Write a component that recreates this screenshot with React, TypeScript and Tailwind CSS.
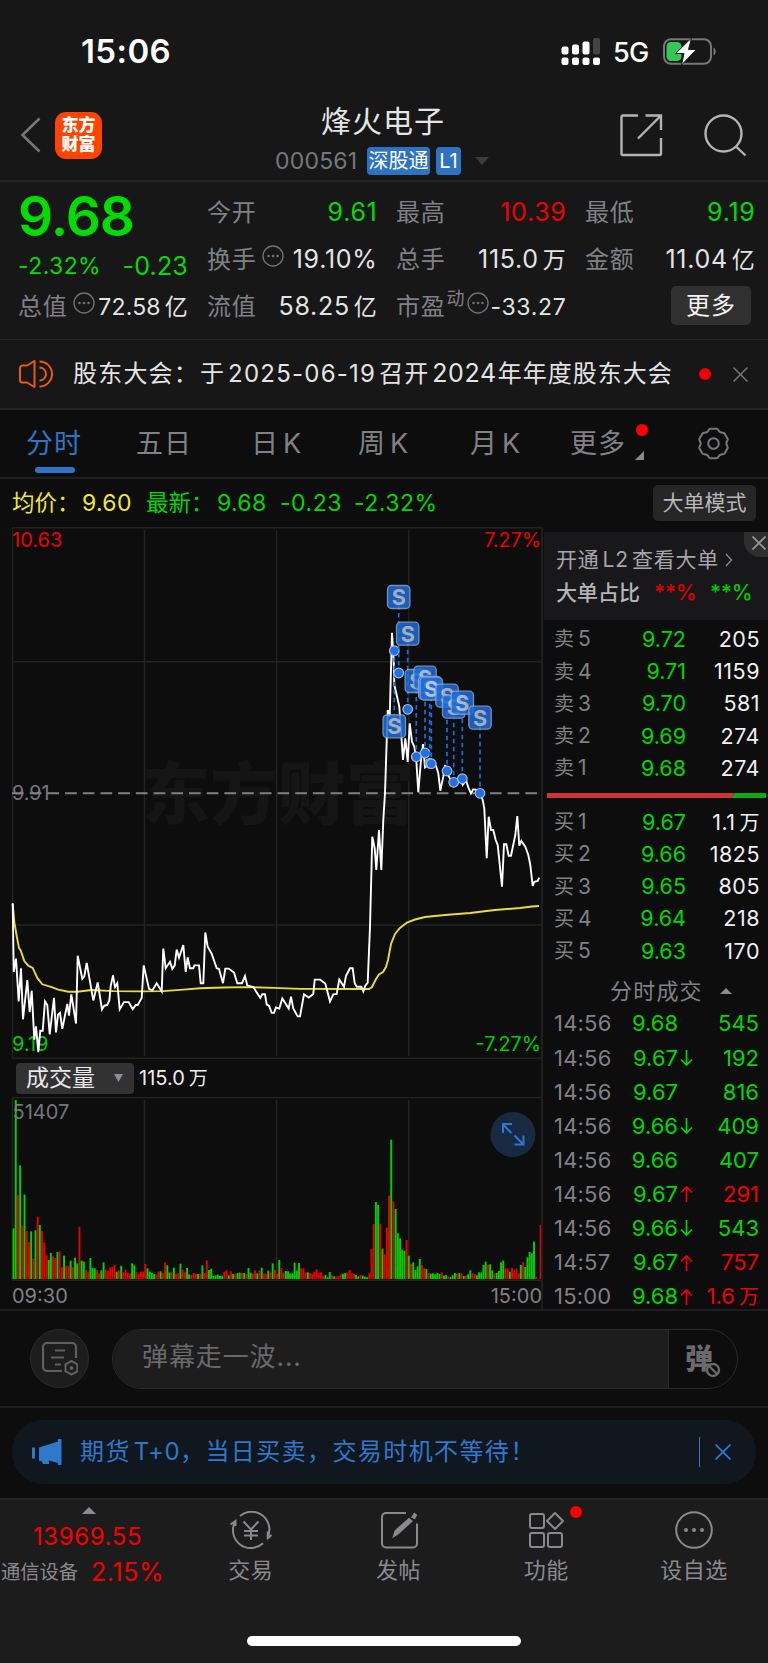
import React from 'react';

const MORNING_PRICE: number[][] = [
  [38,1073],[41,1265],[48,1228],[56,1348],[63,1255],[69,1398],[82,1288],[89,1378],[95,1318],[103,1455],[108,1418],[115,1490],[121,1430],[128,1430],[135,1348],[142,1358],[149,1440],[162,1338],[168,1435],[174,1385],[180,1380],[187,1425],[202,1355],[207,1388],[214,1328],[228,1410],[233,1220],[247,1285],[253,1278],[260,1240],[280,1345],[293,1295],[306,1370],[313,1360],[322,1358],[328,1345],[332,1305],[339,1275],[345,1308],[352,1297],[359,1370],[372,1350],[386,1350],[398,1370],[407,1358],[413,1358],[425,1338],[431,1247],[447,1313],[457,1317],[470,1297],[485,1320],[490,1200],[497,1255],[510,1237],[517,1257],[524,1247],[530,1203],[537,1225],[550,1190],[557,1265],[563,1225],[570,1255],[580,1255],[583,1247],[597,1247],[602,1297],[610,1297],[616,1155],[623,1195],[635,1215],[650,1255],[657,1257],[669,1297],[676,1256],[686,1256],[702,1267],[712,1297],[726,1297],[735,1277],[742,1303],[760,1308],[781,1338],[787,1328],[795,1328],[800,1357],[807,1360],[815,1380],[822,1380],[828,1365],[838,1368],[847,1340],[866,1368],[873,1335],[880,1368],[893,1390],[900,1390],[912,1328],[926,1337],[940,1327],[944,1287],[960,1287],[976,1298],[990,1348],[1000,1328],[1010,1327],[1018,1287],[1032,1307]];

const AFTERNOON_PRICE: number[][] = [
  [344,986.7],[346,975.7],[350,968.3],[352.7,968.3],[354.7,983.3],[356.7,986.7],[361.3,986.7],[363.3,991.3],[365.3,985.7],[367.7,982.7],[370,926.7],[372.3,836.7],[374.7,848.3],[376.3,870],[379,830],[381.3,870],[383.3,820],[385,793.3],[387.7,710],[389.7,716.7],[392,632.7],[393.7,660],[394.3,685],[396.7,695],[399.3,706.7],[403,760],[405.3,738.3],[407.7,762],[409.7,723.3],[412,741.7],[414.3,746.7],[416.3,760],[418.3,792.3],[421,760],[423,744],[425,767.3],[430,763.3],[436,766],[438.3,773.3],[440.3,790.7],[443.3,776.7],[445,765],[447.3,773.3],[451,780.7],[453.7,783.3],[460,778.3],[462.7,785],[466,780],[468.3,787.3],[471,793.3],[473.3,789.3],[477.3,790],[480.7,795],[482.7,800],[484.3,808.3],[486.7,858.3],[488.7,816.7],[491,830],[493.3,830],[495.7,840],[497.7,845],[502,886.7],[504,844.3],[506.3,844.3],[508.7,855.7],[511,855.7],[515.3,835],[517.3,816],[519.3,845.7],[521.3,841],[525.3,846.7],[528.3,855],[530.3,865],[532.7,886],[534.3,881.7],[537.7,881],[539.3,877.7]];

const MORNING_AVG: number[][] = [
  [38,1075],[43,1125],[50,1165],[57,1198],[62,1205],[73,1235],[85,1248],[98,1254],[112,1282],[127,1300],[155,1308],[175,1315],[205,1321],[232,1321],[275,1316],[340,1319],[420,1320],[490,1319],[550,1315],[600,1311],[670,1309],[740,1308],[820,1310],[900,1313]];

const AFTERNOON_AVG: number[][] = [
  [360,989],[369,989],[372,987],[376,979],[379,974.5],[383,972],[386,967],[388,960],[391,944],[395,934],[400,928],[407,922.5],[415,919.5],[425,917],[445,915],[470,913],[495,910],[520,908],[532,906.5],[539,906]];

const toLine = (am: number[][], pm: number[][]) =>
  [...am.map(([x, y]) => [x / 3, 520 + y / 2.8]), ...pm]
    .map(([x, y]) => `${x.toFixed(1)},${y.toFixed(1)}`)
    .join(' ');

const VOLUME = (
  'g152 g537 r252 g341 r161 g253 r144 r110 g143 r62 g146 r187 g162 r144 r110 r71 g57 g78 r68 r63 g81 r83 r35 g70 r40 r40 g55 r35 g64 g47 r157 g55 g52 r27 r22 g63 g33 g32 r27 r17 g26 g50 r28 r24 r35 r36 r42 g22 r26 g40 r20 r29 r18 r17 g47 g41 r22 r15 r22 r23 ' +
  'r45 g32 g22 g18 g15 r14 r22 g23 r18 r50 g41 g20 r20 g34 r16 r18 g46 r28 r20 g33 g14 r12 r18 r15 g15 r16 g41 r18 r56 g27 g31 g9 g11 g13 g9 g10 r22 r26 g11 r23 g15 r15 g18 g19 r18 g18 r15 g33 g19 r16 r26 g17 r25 g34 r17 r15 g25 r20 g47 r28 ' +
  'r15 g57 r33 r20 g24 g23 g17 g17 g49 g25 g48 r33 r32 r20 g20 r18 r16 r22 r29 r18 r20 r10 g12 g5 g21 r11 g8 r7 r9 r14 g16 g18 r20 r27 r18 r16 g12 g8 r12 g10 g7 g5 r17 r90 r165 g231 g222 r166 g91 r74 r154 r250 g418 r233 g210 g137 g122 g88 g85 r117 ' +
  'g70 r45 g50 g27 g38 g60 r42 r32 g30 r18 g16 g17 g14 g18 g15 r20 g10 g12 r8 g6 g11 g18 r16 g18 r17 g9 r10 g14 g26 r17 r15 g11 g20 g20 g42 g52 r43 g44 g26 r17 g18 g24 g50 g55 r33 r32 g22 r33 r26 r31 r17 g42 r50 g36 g65 g81 g77 g112 r7 r0 r162'
).split(' ');

const SELLS = [
  [394.3, 726.3, 650.7], [398.7, 597, 673], [407.7, 633.7, 709.3], [416.3, 681, 756.7], [425, 677.7, 753],
  [429.7, 687.8, 763.3], [431.3, 688.7, 763.7], [447, 695.7, 771], [453.7, 706.7, 782.3], [462.3, 702.7, 778.7], [480, 717.7, 793.3],
];

function More({ className = '' }: { className?: string }) {
  return (
    <svg className={className} width="22" height="22" viewBox="0 0 22 22" fill="none">
      <circle cx="11" cy="11" r="10" stroke="#6f7074" strokeWidth="1.4" />
      <g fill="#6f7074"><circle cx="6.5" cy="11" r="1.3" /><circle cx="11" cy="11" r="1.3" /><circle cx="15.5" cy="11" r="1.3" /></g>
    </svg>
  );
}

function StatusBar() {
  return (
    <div className="flex h-[90px] items-start pl-[82px] pt-[30px] text-white">
      <span className="-ml-px w-[480px] text-[33px] leading-[43px] font-semibold tracking-[0.4px]">15:06</span>
      <svg className="mt-2 shrink-0" width="40" height="28" viewBox="0 0 40 28" fill="#fff">
        <rect x="0.5" y="8.5" width="7" height="8" rx="2" /><rect x="11" y="6.5" width="7" height="10" rx="2" /><rect x="21.5" y="3.5" width="7" height="13" rx="2" />
        <rect x="32" y="0" width="7" height="16.5" rx="2" fill="#444" />
        <rect x="0.5" y="19.5" width="7" height="7.5" rx="2" /><rect x="11" y="19.5" width="7" height="7.5" rx="2" /><rect x="21.5" y="19.5" width="7" height="7.5" rx="2" /><rect x="32" y="19.5" width="7" height="7.5" rx="2" />
      </svg>
      <span className="ml-3 w-[50px] text-[27px] leading-[46px] font-medium tracking-[-0.8px]">5G</span>
      <svg className="mt-2 shrink-0" width="54" height="28" viewBox="0 0 54 28">
        <rect x="1" y="1.2" width="47" height="24.6" rx="7" fill="none" stroke="#77777a" strokeWidth="2" />
        <path d="M50.500 9.500c3 1.500 3 6.500 0 8z" fill="#77777a" />
        <rect x="3.500" y="4" width="15" height="19" rx="4.500" fill="#34c759" />
        <path d="M28.500 0 12.500 15.500h8.500L18.500 27 33.500 11.500h-8z" fill="#fff" stroke="#171717" strokeWidth="1" />
      </svg>
    </div>
  );
}

function Header() {
  return (
    <div className="flex h-[92px] items-center border-b-2 border-[#242426]">
      <svg className="ml-5 shrink-0" width="22" height="36" viewBox="0 0 22 36"><path d="M19.500 1.500 2.500 18l17 16.500" fill="none" stroke="#77777a" strokeWidth="2.600" /></svg>
      <div className="ml-[13px] flex h-[47px] w-[47px] shrink-0 flex-col items-center justify-center rounded-[11px] bg-[#ff4400] text-[17px] leading-[19px] font-black text-white">
        <span>东方</span><span>财富</span>
      </div>
      <div className="ml-[173px] w-[215px]">
        <div className="mt-[6px] pl-[46px] text-[30px] leading-[38px] tracking-[1px] text-[#e4e4e6]">烽火电子</div>
        <div className="mt-[7px] flex h-7 items-center">
          <span className="w-[92px] text-[23px] leading-7 tracking-[0.2px] text-[#77787c]">000561</span>
          <span className="w-[63px] rounded bg-[#2e72c3] text-center text-[20px] leading-7 text-white">深股通</span>
          <span className="ml-[6px] w-[25px] rounded bg-[#2e72c3] text-center text-[20px] leading-7 text-white">L1</span>
          <svg className="ml-[14px]" width="14" height="8" viewBox="0 0 14 8"><path d="M0 0h14L7 8z" fill="#3c3c3e" /></svg>
        </div>
      </div>
      <svg className="ml-[130px] shrink-0" width="43" height="43" viewBox="0 0 43 43" fill="none" stroke="#b4b4b6" strokeWidth="2.400">
        <path d="M18 1.500H3a1.500 1.500 0 0 0-1.500 1.500v36.500A1.500 1.500 0 0 0 3 41h36.500a1.500 1.500 0 0 0 1.500-1.500V24M25.500 1.500H41V16M40.500 2 18 24.500" />
      </svg>
      <svg className="ml-[41px] shrink-0" width="43" height="43" viewBox="0 0 43 43" fill="none" stroke="#b4b4b6" strokeWidth="2.400">
        <circle cx="19.500" cy="19.500" r="18" /><path d="m32 32.500 9.500 9" />
      </svg>
    </div>
  );
}

function Stat({ label, children, color = 'text-[#e4e4e6]', extra }: { label: string; children: React.ReactNode; color?: string; extra?: React.ReactNode }) {
  return (
    <div className="flex h-[47px] items-center justify-between whitespace-nowrap">
      <span className="flex items-center text-[24px] tracking-[0.8px] text-[#808186]">{label}{extra}</span>
      <span className={'-mr-[1.500px] text-[25px] tracking-[0.700px] ' + color}>{children}</span>
    </div>
  );
}

const CJ = ({ children }: { children: React.ReactNode }) => <span className="ml-[4px] text-[23px]">{children}</span>;

function Stats() {
  return (
    <div className="grid h-[158px] grid-cols-4 gap-x-5 border-b border-[#242426] pt-[7px] pr-[14px] pl-[18px]">
      <div className="text-[#00dd00]">
        <div className="h-[58px] text-[55px] leading-[54px] font-semibold tracking-[-1px]">9.68</div>
        <div className="flex h-[36px] items-center justify-between pt-[3px]">
          <span className="text-[23px] tracking-[0.400px]">-2.32%</span><span className="-mr-px text-[25px] tracking-[0.200px]">-0.23</span>
        </div>
        <Stat label="总值" extra={<More className="mb-2 ml-[5px]" />}><span className="text-[23px] tracking-[0.200px]">72.58</span><CJ>亿</CJ></Stat>
      </div>
      <div>
        <Stat label="今开" color="text-[#00dd00]">9.61</Stat>
        <Stat label="换手" extra={<More className="mb-2 ml-[5px]" />}>19.10%</Stat>
        <Stat label="流值">58.25<CJ>亿</CJ></Stat>
      </div>
      <div>
        <Stat label="最高" color="text-[#f00000]">10.39</Stat>
        <Stat label="总手">115.0<CJ>万</CJ></Stat>
        <Stat label="市盈" extra={<><span className="mb-4 ml-[1px] text-[18px] tracking-normal">动</span><More className="mb-2 ml-[2px]" /></>}><span className="text-[23px]">-33.27</span></Stat>
      </div>
      <div>
        <Stat label="最低" color="text-[#00dd00]">9.19</Stat>
        <Stat label="金额">11.04<CJ>亿</CJ></Stat>
        <div className="mt-[3px] ml-auto mr-[3px] h-[39px] w-[80px] rounded-[5px] bg-[#303031] text-center text-[24px] leading-[39px] tracking-[1px] text-[#f2f2f2]">更多</div>
      </div>
    </div>
  );
}

function Notice() {
  return (
    <div className="flex h-[70px] items-center border-b-2 border-[#242426] text-[24px] whitespace-nowrap text-[#e4e4e6]">
      <svg className="ml-[19px] shrink-0" width="34" height="28" viewBox="0 0 34 28" fill="none" stroke="#ea5a0c" strokeWidth="2">
        <path d="M15.500 1v26L8 22.500H3.500A2.500 2.500 0 0 1 1 20V8a2.500 2.500 0 0 1 2.500-2.500H8z" strokeLinejoin="round" />
        <path d="M20.500 1.500a12.500 12.500 0 0 1 0 25M20.500 7.500a6.500 6.500 0 0 1 0 13" />
      </svg>
      <span className="ml-[20px] w-[127px] shrink-0 tracking-[1.200px]">股东大会：</span>
      <span className="w-[473px] shrink-0 tracking-[1px]">于<span className="mr-[3px] ml-[3px] tracking-[1.250px]">2025-06-19</span>召开<span className="mr-[1px] ml-[3px] text-[25px] tracking-[0.600px]">2024</span>年年度股东大会</span>
      <span className="ml-[26px] h-3 w-3 shrink-0 rounded-full bg-[#f50000]" />
      <svg className="ml-[22px] shrink-0" width="15" height="15" viewBox="0 0 15 15"><path d="m0.500 0.500 14 14m0-14-14 14" stroke="#77777a" strokeWidth="1.500" /></svg>
    </div>
  );
}

function Tabs() {
  return (
    <div className="flex h-[69px] items-center border-b-2 border-[#202022] text-[27px] tracking-[1px] whitespace-nowrap text-[#808186]">
      <div className="relative ml-[26px] w-[110px] pt-[2px] text-[#2f74c6]">分时
        <span className="absolute -bottom-[8px] left-[9px] h-[6px] w-10 rounded-[3px] bg-[#2f74c6]" />
      </div>
      <span className="w-[115px] pt-[2px]">五日</span>
      <span className="w-[107px] pt-[2px]">日<span className="ml-[4px]">K</span></span>
      <span className="w-[112px] pt-[2px]">周<span className="ml-[4px]">K</span></span>
      <span className="w-[100px] pt-[2px]">月<span className="ml-[4px]">K</span></span>
      <span className="relative w-[127px] pt-[2px]">更多
        <span className="absolute top-[2px] left-[66px] h-3 w-3 rounded-full bg-[#ff0000]" />
        <svg className="absolute bottom-[5px] left-[65px]" width="9" height="9" viewBox="0 0 9 9"><path d="M9 0v9H0z" fill="#8a8a8e" /></svg>
      </span>
      <svg width="33" height="33" viewBox="0 0 33 33" fill="none" stroke="#77787c" strokeWidth="2">
        <path d="M13.200 1.800h6.600c1.300 0 1.700 2.400 3.400 3.400s3.600.2 4.400 1.300l3.100 5.400c.6 1.300-1.400 2.600-1.400 4.600s2 3.300 1.400 4.600l-3.100 5.400c-.8 1.100-2.700.3-4.400 1.300s-2.100 3.400-3.400 3.400h-6.600c-1.300 0-1.700-2.400-3.400-3.400s-3.600-.2-4.400-1.300l-3.100-5.400c-.6-1.300 1.400-2.600 1.400-4.600s-2-3.300-1.400-4.600l3.100-5.400c.8-1.100 2.700-.3 4.400-1.300s2.100-3.400 3.400-3.400z" />
        <circle cx="16.500" cy="16.500" r="5.300" />
      </svg>
    </div>
  );
}

function InfoRow() {
  return (
    <div className="flex h-[48px] items-center pl-[12px] text-[23px] whitespace-nowrap text-[#00d800]">
      <span className="w-[70px] text-[22.500px] text-[#f0e53c]">均价：</span>
      <span className="w-[64px] tracking-[0.300px] text-[#f0e53c]">9.60</span>
      <span className="w-[71px] text-[22.500px]">最新：</span>
      <span className="w-[63px] tracking-[0.300px]">9.68</span>
      <span className="w-[74px] tracking-[0.500px]">-0.23</span>
      <span className="tracking-[0.500px]">-2.32%</span>
      <span className="ml-auto mr-[12px] h-9 w-[103px] rounded-[5px] bg-[#262627] text-center text-[21px] leading-[35px] text-[#b8b8ba]">大单模式</span>
    </div>
  );
}

function PriceChart() {
  return (
    <svg className="block" width="543" height="532" viewBox="0 527 543 532" fontSize="19.700" style={{ fontFamily: 'Inter, "Noto Sans CJK SC", sans-serif' }}>
      <g stroke="#222223" strokeWidth="1.500">
        <path d="M12 527.700H543M12 661.800H543M12 925H543M12 1058.200H543M12.500 527V1059M144.500 530V1056M276.600 530V1056M408.800 530V1056" fill="none" />
      </g>
      <text x="142" y="819" fontSize="68" fontWeight="900" fill="#151515">东方财富</text>
      <text x="12" y="800" fill="#77787c">9.91</text>
      <path d="M12 793.300H541" stroke="#808086" strokeWidth="2" strokeDasharray="11.700 6" fill="none" />
      <text x="12" y="547" fill="#f00000" fontSize="20">10.63</text>
      <text x="541" y="547" textAnchor="end" fill="#f00000">7.27%</text>
      <text x="12" y="1051" fill="#00cc00" fontSize="20">9.19</text>
      <text x="541" y="1051" textAnchor="end" fill="#00cc00">-7.27%</text>
      <polyline points={toLine(MORNING_AVG, AFTERNOON_AVG)} fill="none" stroke="#e8dc3a" strokeWidth="1.900" />
      <polyline points={toLine(MORNING_PRICE, AFTERNOON_PRICE)} fill="none" stroke="#fff" strokeWidth="1.900" />
      {SELLS.map(([x, top, bottom]) => (
        <g key={x}>
          <path d={`M${x} ${top}V${bottom}`} stroke="#1f6be0" strokeWidth="1.700" strokeDasharray="4.500 3.500" />
          <circle cx={x} cy={bottom} r="4.800" fill="#1f6fe6" stroke="#a9bdd8" strokeWidth="1.200" />
        </g>
      ))}
      {SELLS.map(([x, top]) => (
        <g key={x} opacity="0.85">
          <rect x={x - 11.200} y={top - 11.500} width="22.400" height="23" rx="4" fill="#1b6de0" stroke="#8fa6c4" strokeWidth="1.300" />
          <text x={x} y={top + 7.800} fontSize="21.500" fontWeight="700" textAnchor="middle" fill="#c3c8d0">S</text>
        </g>
      ))}
    </svg>
  );
}

function VolumeChart() {
  return (
    <>
      <div className="flex h-[38px] items-center pl-4 whitespace-nowrap">
        <div className="flex h-[31px] w-[118px] items-center rounded-[4px] bg-[#323233] pl-[10px] text-[23px] text-[#e8e8ea]">成交量
          <svg className="ml-[19px]" width="9" height="8" viewBox="0 0 9 8"><path d="M0 0h9L4.500 8z" fill="#8c8c92" /></svg>
        </div>
        <span className="ml-[5px] text-[20px] text-[#ececee]">115.0<span className="ml-[4px] text-[19px]">万</span></span>
      </div>
      <svg className="block" width="543" height="212" viewBox="0 1097 543 212" fontSize="20" style={{ fontFamily: 'Inter, sans-serif' }}>
        <path d="M12 1097.500H543M12 1280.300H543M12.500 1097V1280M144.500 1100V1279M276.600 1100V1279M408.800 1100V1279" fill="none" stroke="#242425" strokeWidth="1.500" />
        {VOLUME.map((bar, i) => {
          const h = Number(bar.slice(1)) / 3;
          return <rect key={i} x={12.600 + i * 2.196} y={1279 - h} width="1.900" height={h} fill={bar[0] === 'g' ? '#00d400' : '#ea0000'} />;
        })}
        <g fill="#808186">
          <text x="12.500" y="1119" opacity="0.9">51407</text>
          <text x="12" y="1303">09:30</text>
          <text x="542" y="1303" textAnchor="end">15:00</text>
        </g>
        <circle cx="513" cy="1134.500" r="22.500" fill="#182a41" />
        <path d="M503 1133v-9h9M503 1124.500l8.500 8.500M514.500 1144.500h9v-9M523 1144l-8.500-8.500" fill="none" stroke="#2f78cc" strokeWidth="2" />
      </svg>
    </>
  );
}

const ASKS = [['卖', '5', '9.72', '205'], ['卖', '4', '9.71', '1159'], ['卖', '3', '9.70', '581'], ['卖', '2', '9.69', '274'], ['卖', '1', '9.68', '274']];
const BIDS = [['买', '1', '9.67', '1.1万'], ['买', '2', '9.66', '1825'], ['买', '3', '9.65', '805'], ['买', '4', '9.64', '218'], ['买', '5', '9.63', '170']];
const TICKS = [['14:56', '9.68', '', '545', 'g'], ['14:56', '9.67', '↓', '192', 'g'], ['14:56', '9.67', '', '816', 'g'], ['14:56', '9.66', '↓', '409', 'g'], ['14:56', '9.66', '', '407', 'g'], ['14:56', '9.67', '↑', '291', 'r'], ['14:56', '9.66', '↓', '543', 'g'], ['14:57', '9.67', '↑', '757', 'r'], ['15:00', '9.68', '↑', '1.6万', 'r']];

function Amount({ value }: { value: string }) {
  return value.endsWith('万') ? <>{value.slice(0, -1)}<span className="ml-[4px] text-[20px]">万</span></> : <>{value}</>;
}

function Level({ row }: { row: string[] }) {
  return (
    <div className="flex h-[32.200px] items-center text-[21.500px] whitespace-nowrap">
      <span className="-ml-px w-[57px] text-[20px] text-[#808186]">{row[0]}<span className="ml-[4px] text-[21px]">{row[1]}</span></span>
      <span className="w-[75px] text-right text-[#00d800]">{row[2]}</span>
      <span className="-mr-px ml-auto tracking-[0.500px] text-[#f0f0f2]"><Amount value={row[3]} /></span>
    </div>
  );
}

function OrderBook() {
  return (
    <div className="w-[227px] border-l-2 border-[#1f1f20] pt-[5px]">
      <div className="relative ml-px h-[88px] overflow-hidden bg-[#18181a] pt-[13px] pl-[12px] text-[21px] whitespace-nowrap text-[#a6a6aa]">
        <div className="flex h-[30px] items-center tracking-[0.800px]">开通<span className="mx-[3px]">L2</span>查看大单
          <svg className="ml-[6px]" width="8" height="14" viewBox="0 0 8 14"><path d="m1 1 5.500 6L1 13" fill="none" stroke="#85858a" strokeWidth="1.400" /></svg>
        </div>
        <div className="mt-[3px] flex h-[30px] items-center font-medium">
          <span className="w-[98px] text-[#b4b4b6]">大单占比</span><span className="w-[56px] text-[21px] text-[#e00000]">**%</span><span className="text-[21px] text-[#00cc00]">**%</span>
        </div>
        <div className="absolute top-0 right-0 flex h-[25px] w-6 items-center justify-center rounded-bl-[16px] bg-[#2e2e2f]">
          <svg className="mt-[-3px] ml-[6px]" width="14" height="14" viewBox="0 0 14 14"><path d="m0.500 0.500 13 13m0-13-13 13" stroke="#9a9a9e" strokeWidth="1.600" /></svg>
        </div>
      </div>
      <div className="pt-[3px] pr-[9px] pl-[12px]">{ASKS.map(r => <Level key={r[1]} row={r} />)}</div>
      <svg className="mt-[9px] ml-[4px] block" width="219" height="5" viewBox="0 0 219 5"><path d="M0 0h188l-4 5H0z" fill="#d03434" /><path d="M188 0h31v5h-35z" fill="#12a812" /></svg>
      <div className="pt-[8px] pr-[9px] pl-[12px]">{BIDS.map(r => <Level key={r[1]} row={r} />)}</div>
      <div className="flex h-[40px] items-center pt-[9px] pl-[67px] text-[22px] tracking-[1.200px] text-[#808186]">分时成交
        <svg className="ml-[17px]" width="12" height="6" viewBox="0 0 12 6"><path d="M0 6h12L6 0z" fill="#8c8c92" /></svg>
      </div>
      <div className="pr-[9px] pl-[11px]">
        {TICKS.map((t, i) => (
          <div key={i} className="flex h-[34.100px] items-center text-[22px] whitespace-nowrap">
            <span className="w-[60px] tracking-[0.200px] text-[#808186]">{t[0]}</span>
            <span className="w-[64px] text-right text-[#00d800]">{t[1]}</span>
            <svg className="ml-[2px]" width="13" height="18" viewBox="0 0 13 18">
              {t[2] === '↓' && <path d="M6.500 1v15.500M1 10.500l5.500 5.500 5.500-5.500" fill="none" stroke="#00d800" strokeWidth="1.700" />}
              {t[2] === '↑' && <path d="M6.500 17V1.500M1 7.500 6.500 2l5.500 5.500" fill="none" stroke="#f00000" strokeWidth="1.700" />}
            </svg>
            <span className={'ml-auto ' + (t[4] === 'g' ? 'text-[#00d800]' : 'text-[#f00000]')}><Amount value={t[3]} /></span>
          </div>
        ))}
      </div>
    </div>
  );
}

function Danmu() {
  return (
    <div className="flex h-[99px] items-center border-y-2 border-[#1e1e1f] pl-[30px]">
      <div className="flex h-[59px] w-[59px] items-center justify-center rounded-full border border-[#2b2b2c] bg-[#1d1d1e]">
        <svg width="36" height="34" viewBox="0 0 36 34" fill="none" stroke="#5f5f61" strokeWidth="2.200">
          <path d="M20 29H5a4 4 0 0 1-4-4V5a4 4 0 0 1 4-4h25a4 4 0 0 1 4 4v11M13 8.500h10M9 15.500h13M13 22.500h6M29.500 19l6 3.400v6.800l-6 3.400-6-3.400v-6.800z" />
          <circle cx="29.500" cy="26" r="1.200" fill="#5f5f61" strokeWidth="1.500" />
        </svg>
      </div>
      <div className="ml-[23px] flex h-[60px] w-[626px] overflow-hidden rounded-[30px] border border-[#2a2a2b]">
        <div className="w-[556px] border-r border-[#2a2a2b] bg-[#1d1d1e] pl-[29px] text-[26px] leading-[54px] tracking-[0.900px] text-[#69696b]">弹幕走一波...</div>
        <div className="relative flex-1 pl-[16px] text-[28px] leading-[58px] font-black text-[#6a6a6c]">弹
          <svg className="absolute top-[32px] left-[36px]" width="16" height="16" viewBox="0 0 16 16" fill="#0d0d0d" stroke="#6a6a6c" strokeWidth="2.400"><circle cx="8" cy="8" r="6" /><path d="m4 4 8 8" /></svg>
        </div>
      </div>
    </div>
  );
}

function Banner() {
  return (
    <div className="h-[90px] pt-[12px]">
      <div className="mx-3 flex h-[64px] items-center rounded-[32px] bg-[#10171e] text-[24px] whitespace-nowrap text-[#2f78cc]">
        <svg className="ml-[20px]" width="30" height="27" viewBox="0 0 30 27" fill="#2f78cc">
          <path d="M29.500 0v26h-3.500v-2l-9-2.500V25h-6l-1.500-3H7V8.500L26 2.500V0zM0 8.500h3v11H0z" />
        </svg>
        <span className="ml-[18px] tracking-[1.400px]">期货<span className="ml-[3px] tracking-[0.500px]">T+0</span>，当日买卖，交易时机不等待！</span>
        <span className="mr-[15px] ml-auto h-[30px] w-px bg-[#2f78cc]" />
        <svg className="mr-[25px]" width="16" height="16" viewBox="0 0 16 16"><path d="m0.500 0.500 15 15m0-15-15 15" stroke="#2f78cc" strokeWidth="1.700" /></svg>
      </div>
    </div>
  );
}

function NavItem({ label, dot, children }: { label: string; dot?: boolean; children: React.ReactNode }) {
  return (
    <div className="relative flex flex-1 flex-col items-center pt-[11px]">
      <svg width="44" height="40" viewBox="0 0 44 40" fill="none" stroke="#8a8a8e" strokeWidth="2">{children}</svg>
      <span className="mt-[2px] text-[22px] leading-[34px] tracking-[0.500px] text-[#8a8a8e]">{label}</span>
      {dot && <span className="absolute top-[6px] left-[97px] h-3 w-3 rounded-full bg-[#ff0000]" />}
    </div>
  );
}

function BottomNav() {
  return (
    <div className="h-[165px] border-t-2 border-[#232324] bg-[#1c1c1d]">
      <div className="flex h-[136px]">
        <div className="w-[177px] text-[24px] whitespace-nowrap text-[#f50000]">
          <svg className="mt-[7px] ml-[82px]" width="14" height="7" viewBox="0 0 14 7"><path d="M0 7h14L7 0z" fill="#8c8c92" /></svg>
          <div className="mt-[6px] ml-[33px] leading-[34px] tracking-[0.600px]">13969.55</div>
          <div className="mt-px flex leading-[34px]"><span className="w-[91px] pl-px text-[19.300px] text-[#8a8a8e]">通信设备</span><span className="text-[25px] tracking-[0.600px]">2.15%</span></div>
        </div>
        <NavItem label="交易">
          <path d="M11 5A17.800 17.800 0 0 1 38.500 26.500M34 32.200A17.800 17.800 0 0 1 6 11M1.500 13.500l5-3.500v5M38 28l4.500-4M38.700 20.500v7.500M14.500 10.500l7.500 8 7.500-8M22 18.500V29M15 20h14M15 24.500h14" />
        </NavItem>
        <NavItem label="发帖">
          <path d="M29 2H9a4 4 0 0 0-4 4V32.500a4 4 0 0 0 4 4h27a4 4 0 0 0 4-4V12.500" />
          <path d="m35.500 6 2-3 1.500 1-1.500 3zM17 25l1.500-5L32 8l2.500 2L21 22.500z" fill="#8a8a8e" />
        </NavItem>
        <NavItem label="功能" dot>
          <rect x="6" y="3" width="14" height="14" rx="2" /><rect x="6" y="22" width="14" height="14" rx="2" /><rect x="24" y="22" width="14" height="14" rx="2" />
          <path d="m31 2 8 8-8 8-8-8z" strokeLinejoin="round" />
        </NavItem>
        <NavItem label="设自选">
          <circle cx="22" cy="19" r="17.800" /><g fill="#8a8a8e" stroke="none"><circle cx="14" cy="19" r="2" /><circle cx="22" cy="19" r="2" /><circle cx="30" cy="19" r="2" /></g>
        </NavItem>
      </div>
      <div className="mx-auto h-[10px] w-[274px] rounded-full bg-white" />
    </div>
  );
}

export default function App() {
  return (
    <div className="h-[1663px] w-[768px] overflow-hidden bg-[#0d0d0d] font-['Inter','Noto_Sans_CJK_SC',sans-serif] leading-normal">
      <div className="bg-[#171717]">
        <StatusBar />
        <Header />
        <Stats />
        <Notice />
      </div>
      <Tabs />
      <InfoRow />
      <div className="flex h-[782px]">
        <div className="w-[541px]">
          <PriceChart />
          <VolumeChart />
        </div>
        <OrderBook />
      </div>
      <Danmu />
      <Banner />
      <BottomNav />
    </div>
  );
}
